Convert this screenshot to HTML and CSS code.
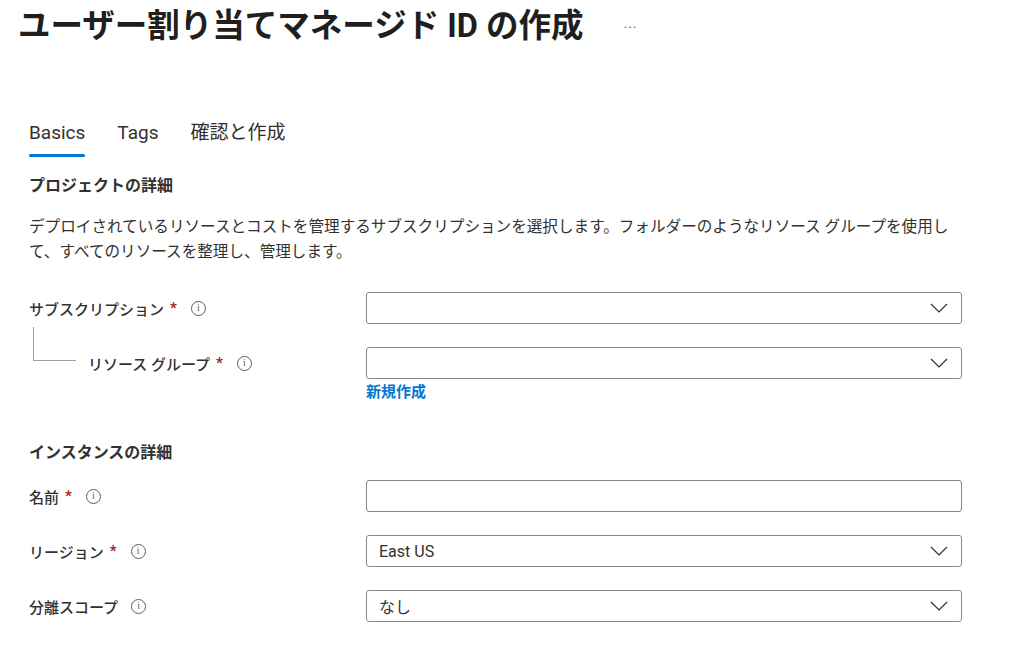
FILE: index.html
```html
<!DOCTYPE html>
<html lang="ja">
<head>
<meta charset="utf-8">
<link rel="stylesheet" href="styles.css">
</head>
<body>
<div class="page">
  <header class="header">
    <h1 class="title">ユーザー割り当てマネージド ID の作成</h1>
    <span class="more">···</span>
  </header>

  <nav class="tabs">
    <span class="tab active">Basics</span>
    <span class="tab">Tags</span>
    <span class="tab">確認と作成</span>
  </nav>

  <h2 class="section">プロジェクトの詳細</h2>
  <p class="desc">デプロイされているリソースとコストを管理するサブスクリプションを選択します。フォルダーのようなリソース グループを使用して、すべてのリソースを整理し、管理します。</p>

  <div class="row first">
    <div class="label">サブスクリプション<span class="req">*</span><span class="info">i</span></div>
    <div class="field"><div class="box select"><span class="value"></span><svg class="chev" width="18" height="10" viewBox="0 0 18 10"><path d="M1 1 L9 9 L17 1" fill="none" stroke="#323130" stroke-width="1.2"/></svg></div></div>
  </div>

  <div class="row sub">
    <div class="label nested"><span class="tree"></span>リソース グループ<span class="req">*</span><span class="info">i</span></div>
    <div class="field">
      <div class="box select"><span class="value"></span><svg class="chev" width="18" height="10" viewBox="0 0 18 10"><path d="M1 1 L9 9 L17 1" fill="none" stroke="#323130" stroke-width="1.2"/></svg></div>
      <a class="link">新規作成</a>
    </div>
  </div>

  <h2 class="section second">インスタンスの詳細</h2>

  <div class="row r-name">
    <div class="label">名前<span class="req">*</span><span class="info">i</span></div>
    <div class="field"><div class="box"><span class="value"></span></div></div>
  </div>

  <div class="row r-region">
    <div class="label">リージョン<span class="req">*</span><span class="info">i</span></div>
    <div class="field"><div class="box select"><span class="value">East US</span><svg class="chev" width="18" height="10" viewBox="0 0 18 10"><path d="M1 1 L9 9 L17 1" fill="none" stroke="#323130" stroke-width="1.2"/></svg></div></div>
  </div>

  <div class="row r-scope">
    <div class="label">分離スコープ<span class="info spaced">i</span></div>
    <div class="field"><div class="box select"><span class="value">なし</span><svg class="chev" width="18" height="10" viewBox="0 0 18 10"><path d="M1 1 L9 9 L17 1" fill="none" stroke="#323130" stroke-width="1.2"/></svg></div></div>
  </div>
</div>
</body>
</html>
```

FILE: styles.css
```css
* { box-sizing: border-box; }
html, body { margin: 0; padding: 0; background: #fff; }
body {
  font-family: "Roboto", "Noto Sans CJK JP", sans-serif;
  color: #323130;
}
.page { width: 1024px; height: 667px; overflow: hidden; }

.header {
  display: flex;
  align-items: center;
  padding: 6px 0 0 18px;
  height: 46px;
}
.title {
  margin: 0;
  font-size: 32.5px;
  line-height: 40px;
  font-weight: 700;
  color: #201f1e;
  letter-spacing: 0;
}
.more {
  margin-left: 40px;
  font-size: 14px;
  color: #605e5c;
  letter-spacing: 1px;
  margin-top: 4px;
}

.tabs {
  display: flex;
  gap: 32px;
  margin: 74px 0 0 29px;
  height: 42px;
}
.tab {
  font-size: 19px;
  line-height: 26px;
  color: #323130;
  position: relative;
  height: 42px;
}
.tab.active::after {
  content: "";
  position: absolute;
  left: 0; right: 0;
  top: 34px;
  height: 3px;
  background: #0078d4;
  border-radius: 2px;
}

.section {
  margin: 12px 0 0 29px;
  font-size: 16px;
  line-height: 24px;
  font-weight: 700;
  color: #323130;
}
.section.second { margin-top: 38px; }

.desc {
  margin: 17px 0 0 29px;
  width: 930px;
  font-size: 15.6px;
  line-height: 25px;
  color: #323130;
}

.row {
  display: flex;
  align-items: center;
  padding-left: 29px;
  height: 32px;
}
.row.first { margin-top: 27px; }
.row.sub { margin-top: 23px; align-items: flex-start; height: auto; }
.row.sub .label { height: 32px; }
.r-name { margin-top: 15px; }
.r-region, .r-scope { margin-top: 23px; }

.label {
  width: 337px;
  display: flex;
  align-items: center;
  font-size: 15px;
  font-weight: 500;
  color: #323130;
  position: relative;
}
.label.nested { padding-left: 59px; }
.tree {
  position: absolute;
  left: 4px;
  top: -20px;
  width: 43px;
  height: 34px;
  border-left: 1px solid #a19f9d;
  border-bottom: 1px solid #a19f9d;
}
.req {
  color: #a4262c;
  margin-left: 6px;
  font-size: 15px;
  font-weight: 700;
}
.info {
  display: inline-flex;
  align-items: center;
  justify-content: center;
  width: 15px;
  height: 15px;
  border: 1px solid #605e5c;
  border-radius: 50%;
  font-size: 10px;
  line-height: 1;
  font-family: "Liberation Serif", serif;
  color: #605e5c;
  margin-left: 14px;
  font-weight: 400;
}
.info.spaced { margin-left: 13px; }

.field { width: 596px; display: flex; flex-direction: column; }
.box {
  height: 32px;
  border: 1px solid #8a8886;
  border-radius: 3px;
  display: flex;
  align-items: center;
  justify-content: space-between;
  padding: 0 12px 0 12px;
  background: #fff;
}
.value { font-size: 16px; color: #323130; }
.chev { display: block; margin-right: 1px; }
.link {
  margin-top: 2px;
  font-size: 15px;
  line-height: 22px;
  font-weight: 700;
  color: #0078d4;
}
```
